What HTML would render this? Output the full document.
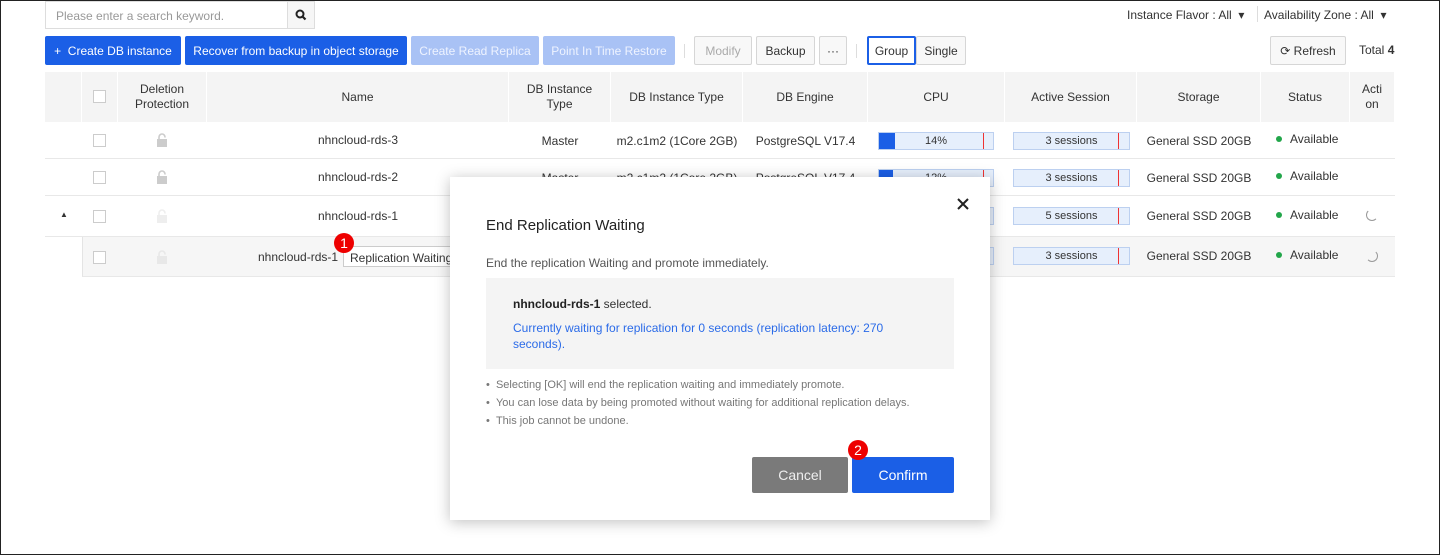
<!DOCTYPE html>
<html><head><style>
*{box-sizing:border-box;margin:0;padding:0}
body{width:1440px;height:555px;overflow:hidden;font-family:"Liberation Sans",sans-serif;font-size:12px;color:#333;background:#fff;position:relative}
.frame{position:absolute;inset:0;border:1px solid #222}
.a{position:absolute}
.btn{position:absolute;top:36px;height:29px;border:1px solid #d6d6d6;border-radius:2px;background:#f8f8f8;display:flex;align-items:center;justify-content:center;font-size:12px;color:#333}
.blue{background:#1b5fe6;border-color:#1b5fe6;color:#fff}
.lblue{background:#a9c2f5;border-color:#a9c2f5;color:#eef3ff}
.hd{position:absolute;top:72px;height:50px;background:#f4f4f4;display:flex;align-items:center;justify-content:center;text-align:center;line-height:15px;color:#333;border-right:1px solid #fff}
.row{position:absolute;left:45px;width:1350px;border-bottom:1px solid #e8e8e8}
.c{position:absolute;display:flex;align-items:center;justify-content:center}
.cb{position:absolute;left:93px;width:13px;height:13px;border:1px solid #ccc;background:#fff}
.bar{position:absolute;height:18px;border:1px solid #bcd0f0;background:#e6effc;font-size:11px;display:flex;align-items:center;justify-content:center}
.bar i{position:absolute;top:0;bottom:0;width:1px;background:#e33}
.dot{display:inline-block;width:6px;height:6px;border-radius:50%;background:#22a64a;margin-right:8px;vertical-align:1px}
.lock{position:absolute;left:156px}
</style></head><body>
<div class="frame"></div>
<div class="a" style="left:45px;top:1px;width:243px;height:28px;border:1px solid #ddd;padding:7px 10px;color:#999">Please enter a search keyword.</div>
<div class="a" style="left:287px;top:1px;width:28px;height:28px;border:1px solid #ddd;background:#f6f6f6"><svg width="26" height="26" viewBox="0 0 26 26"><circle cx="12" cy="12" r="3.5" fill="none" stroke="#222" stroke-width="2"/><path d="M14.5 14.5l3 3" stroke="#222" stroke-width="2.2"/></svg></div>
<div class="a" style="left:1127px;top:8px">Instance Flavor : All &nbsp;▾</div>
<div class="a" style="left:1257px;top:6px;height:16px;border-left:1px solid #ddd"></div>
<div class="a" style="left:1264px;top:8px">Availability Zone : All &nbsp;▾</div>
<div class="btn blue" style="left:45px;width:136px">+ &nbsp;Create DB instance</div>
<div class="btn blue" style="left:185px;width:222px">Recover from backup in object storage</div>
<div class="btn lblue" style="left:411px;width:128px">Create Read Replica</div>
<div class="btn lblue" style="left:543px;width:132px">Point In Time Restore</div>
<div class="a" style="left:684px;top:44px;height:14px;border-left:1px solid #ddd"></div>
<div class="btn" style="left:694px;width:58px;color:#aaa">Modify</div>
<div class="btn" style="left:756px;width:59px">Backup</div>
<div class="btn" style="left:819px;width:28px">···</div>
<div class="a" style="left:856px;top:44px;height:14px;border-left:1px solid #ddd"></div>
<div class="btn" style="left:867px;width:49px;border:2px solid #1b5fe6;background:#fff">Group</div>
<div class="btn" style="left:916px;width:50px">Single</div>
<div class="btn" style="left:1270px;width:76px">⟳ Refresh</div>
<div class="a" style="left:1359px;top:43px">Total <b>4</b></div>

<div class="hd" style="left:45px;width:37px"></div>
<div class="hd" style="left:82px;width:36px"><span class="cb" style="left:11px;top:18px"></span></div>
<div class="hd" style="left:118px;width:89px">Deletion<br>Protection</div>
<div class="hd" style="left:207px;width:302px">Name</div>
<div class="hd" style="left:509px;width:102px">DB Instance<br>Type</div>
<div class="hd" style="left:611px;width:132px">DB Instance Type</div>
<div class="hd" style="left:743px;width:125px">DB Engine</div>
<div class="hd" style="left:868px;width:137px">CPU</div>
<div class="hd" style="left:1005px;width:132px">Active Session</div>
<div class="hd" style="left:1137px;width:124px">Storage</div>
<div class="hd" style="left:1261px;width:89px">Status</div>
<div class="hd" style="left:1350px;width:45px">Acti<br>on</div>

<div class="row" style="top:122px;height:37px"></div>
<div class="row" style="top:159px;height:37px"></div>
<div class="row" style="top:196px;height:41px"></div>
<div class="row" style="top:237px;height:40px;left:82px;width:1313px;background:#f6f6f6;border-left:1px solid #e4e4e4"></div>

<div class="cb" style="top:134px"></div><div class="cb" style="top:171px"></div><div class="cb" style="top:210px"></div><div class="cb" style="top:251px"></div>
<svg class="lock" style="top:133px" width="12" height="14" viewBox="0 0 12 14"><path d="M3 6V4a3 3 0 0 1 6 0v0.5" fill="none" stroke="#ccc" stroke-width="1.6"/><rect x="1" y="6" width="10" height="8" fill="#ccc"/></svg>
<svg class="lock" style="top:170px" width="12" height="14" viewBox="0 0 12 14"><path d="M3 6V4a3 3 0 0 1 6 0v0.5" fill="none" stroke="#ccc" stroke-width="1.6"/><rect x="1" y="6" width="10" height="8" fill="#ccc"/></svg>
<svg class="lock" style="top:209px" width="12" height="14" viewBox="0 0 12 14"><path d="M3 6V4a3 3 0 0 1 6 0v0.5" fill="none" stroke="#eee" stroke-width="1.6"/><rect x="1" y="6" width="10" height="8" fill="#eee"/></svg>
<svg class="lock" style="top:250px" width="12" height="14" viewBox="0 0 12 14"><path d="M3 6V4a3 3 0 0 1 6 0v0.5" fill="none" stroke="#e8e8e8" stroke-width="1.6"/><rect x="1" y="6" width="10" height="8" fill="#e8e8e8"/></svg>
<div class="a" style="left:60px;top:210px;font-size:8px">▲</div>

<div class="c" style="left:207px;width:302px;top:133px">nhncloud-rds-3</div>
<div class="c" style="left:207px;width:302px;top:170px">nhncloud-rds-2</div>
<div class="c" style="left:207px;width:302px;top:209px">nhncloud-rds-1</div>
<div class="a" style="left:258px;top:250px">nhncloud-rds-1</div>
<div class="a" style="left:343px;top:246px;width:120px;height:21px;border:1px solid #ccc;background:#fff;padding:4px 6px">Replication Waiting</div>
<div class="a" style="left:334px;top:233px;width:20px;height:20px;border-radius:50%;background:#e00;color:#fff;text-align:center;line-height:20px;font-size:14px">1</div>

<div class="c" style="left:509px;width:102px;top:134px">Master</div>
<div class="c" style="left:509px;width:102px;top:171px">Master</div>
<div class="c" style="left:611px;width:132px;top:134px">m2.c1m2 (1Core 2GB)</div>
<div class="c" style="left:611px;width:132px;top:171px">m2.c1m2 (1Core 2GB)</div>
<div class="c" style="left:743px;width:125px;top:134px">PostgreSQL V17.4</div>
<div class="c" style="left:743px;width:125px;top:171px">PostgreSQL V17.4</div>
<div class="bar" style="left:878px;top:132px;width:116px"><b style="position:absolute;left:0;top:0;bottom:0;width:16px;background:#1b5fe6"></b>14%<i style="left:104px"></i></div>
<div class="bar" style="left:878px;top:169px;width:116px"><b style="position:absolute;left:0;top:0;bottom:0;width:14px;background:#1b5fe6"></b>12%<i style="left:104px"></i></div>
<div class="bar" style="left:878px;top:207px;width:116px"></div>
<div class="bar" style="left:878px;top:247px;width:116px"></div>
<div class="bar" style="left:1013px;top:132px;width:117px">3 sessions<i style="left:104px"></i></div>
<div class="bar" style="left:1013px;top:169px;width:117px">3 sessions<i style="left:104px"></i></div>
<div class="bar" style="left:1013px;top:207px;width:117px">5 sessions<i style="left:104px"></i></div>
<div class="bar" style="left:1013px;top:247px;width:117px">3 sessions<i style="left:104px"></i></div>
<div class="c" style="left:1137px;width:124px;top:134px">General SSD 20GB</div>
<div class="c" style="left:1137px;width:124px;top:171px">General SSD 20GB</div>
<div class="c" style="left:1137px;width:124px;top:209px">General SSD 20GB</div>
<div class="c" style="left:1137px;width:124px;top:249px">General SSD 20GB</div>
<div class="a" style="left:1276px;top:132px"><span class="dot"></span>Available</div>
<div class="a" style="left:1276px;top:169px"><span class="dot"></span>Available</div>
<div class="a" style="left:1276px;top:208px"><span class="dot"></span>Available</div>
<div class="a" style="left:1276px;top:248px"><span class="dot"></span>Available</div>
<div class="a" style="left:1366px;top:209px;width:12px;height:12px;border-radius:50%;border:1px solid transparent;border-left-color:#999;border-bottom-color:#999"></div>
<div class="a" style="left:1366px;top:250px;width:12px;height:12px;border-radius:50%;border:1px solid transparent;border-right-color:#999;border-bottom-color:#999"></div>

<div class="a" style="left:450px;top:177px;width:540px;height:343px;background:#fff;box-shadow:0 2px 14px rgba(0,0,0,.25)">
<svg class="a" style="left:507px;top:21px" width="12" height="12" viewBox="0 0 12 12"><path d="M1 1L11 11M11 1L1 11" stroke="#222" stroke-width="2"/></svg>
<div class="a" style="left:36px;top:40px;font-size:15px;color:#222">End Replication Waiting</div>
<div class="a" style="left:36px;top:79px;color:#555">End the replication Waiting and promote immediately.</div>
<div class="a" style="left:36px;top:101px;width:468px;height:91px;background:#f4f4f4;padding:18px 27px;line-height:16px">
<div><b style="color:#222">nhncloud-rds-1</b> selected.</div>
<div style="color:#2b6be8;margin-top:8px">Currently waiting for replication for 0 seconds (replication latency: 270 seconds).</div></div>
<div class="a" style="left:36px;top:199px;font-size:11px;color:#777;line-height:18px">• &nbsp;Selecting [OK] will end the replication waiting and immediately promote.<br>• &nbsp;You can lose data by being promoted without waiting for additional replication delays.<br>• &nbsp;This job cannot be undone.</div>
<div class="a" style="left:302px;top:280px;width:96px;height:36px;background:#7a7a7a;border-radius:2px;color:#eee;font-size:14px;display:flex;align-items:center;justify-content:center">Cancel</div>
<div class="a" style="left:402px;top:280px;width:102px;height:36px;background:#1b5fe6;border-radius:2px;color:#fff;font-size:14px;display:flex;align-items:center;justify-content:center">Confirm</div>
<div class="a" style="left:398px;top:263px;width:20px;height:20px;border-radius:50%;background:#e00;color:#fff;text-align:center;line-height:20px;font-size:14px">2</div>
</div>
</body></html>
